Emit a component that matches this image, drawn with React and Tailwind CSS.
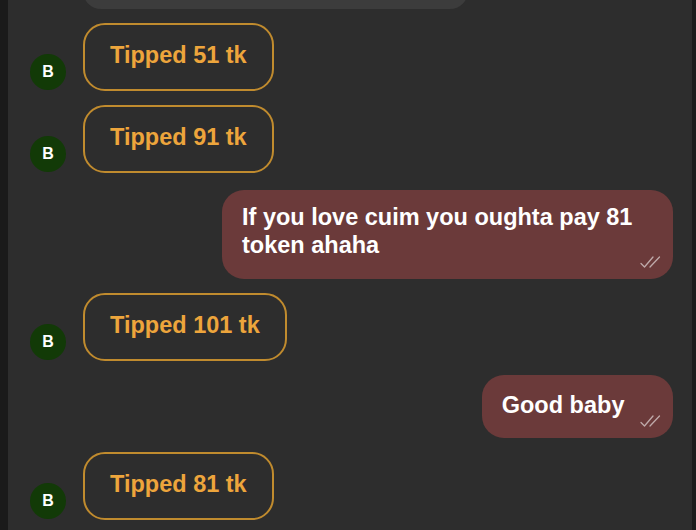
import { useRef } from "react";

const messages = [
  { id: 1, type: "tip", amount: 51 },
  { id: 2, type: "tip", amount: 91 },
  { id: 3, type: "out", text: "If you love cuim you oughta pay 81 token ahaha", spaced: true },
  { id: 4, type: "tip", amount: 101 },
  { id: 5, type: "out", text: "Good baby", short: true },
  { id: 6, type: "tip", amount: 81 },
];

const font = { fontFamily: '"Liberation Sans", Arial, sans-serif' };

const DoubleCheck = () => (
  <svg
    width="24"
    height="14"
    viewBox="0 0 24 14"
    fill="none"
    stroke="#bfaaaa"
    strokeWidth="1.3"
    strokeLinecap="round"
    strokeLinejoin="round"
  >
    <path d="M2 8.5 L5.5 12 L14 2" />
    <path d="M11 12 L20.5 2" />
  </svg>
);

const Avatar = () => (
  <div className="w-9 h-9 rounded-full bg-[#123a07] flex items-center justify-center text-white text-[16px] font-bold shrink-0 mb-px">
    B
  </div>
);

const TipRow = ({ amount }) => (
  <div className="flex items-end gap-[17px]">
    <Avatar />
    <div className="border-2 border-[#c08b2e] rounded-[22px] px-[25px] pt-4 pb-5 text-[#eda53c] font-bold text-[23.5px] leading-[28px]">
      Tipped {amount} tk
    </div>
  </div>
);

const OutBubble = ({ text, short }) => (
  <div className="flex justify-end pr-[19px]">
    <div
      className={`relative max-w-[451px] bg-[#6b3a3a] rounded-[22px] pl-5 pr-5 text-white font-bold text-[23.5px] leading-[28px] ${
        short ? "pt-4 pb-[19px]" : "pt-[13px] pb-5"
      }`}
    >
      {text} <span className="inline-block w-[22px]"></span>
      <span className="absolute right-[10px] bottom-[10px]">
        <DoubleCheck />
      </span>
    </div>
  </div>
);

export default function App() {
  const listRef = useRef(null);

  return (
    <div className="h-[530px] w-[696px] flex bg-[#2d2d2d] overflow-hidden" style={font}>
      <div className="w-2 bg-[#1a1a1a] shrink-0" />
      <div ref={listRef} className="flex-1 flex flex-col gap-[14px] pl-[22px]">
        {/* tail of the previous incoming message */}
        <div className="ml-[53px] w-[385px] h-[60px] -mt-[51px] bg-[#3c3c3c] rounded-[18px] shrink-0" />
        {messages.map((m) => (
          <div key={m.id} className={m.spaced ? "mt-[3px]" : ""}>
            {m.type === "tip" ? (
              <TipRow amount={m.amount} />
            ) : (
              <OutBubble text={m.text} short={m.short} />
            )}
          </div>
        ))}
      </div>
      <div className="w-1 bg-[#1c1c1c] shrink-0" />
    </div>
  );
}
